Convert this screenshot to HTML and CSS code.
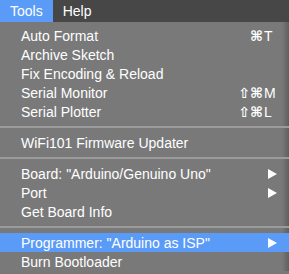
FILE: index.html
```html
<!DOCTYPE html>
<html lang="en">
<head>
  <meta charset="UTF-8">
  <title>Tools menu</title>
  <link rel="stylesheet" href="styles.css">
</head>
<body>

<!-- Menu bar -->
<div class="menubar">
  <span class="menubar-item active">Tools</span>
  <span class="menubar-item">Help</span>
</div>

<!-- Dropdown -->
<div class="menu">
  <div class="item"><span>Auto Format</span><span class="keys"><span class="mods">⌘</span><span class="key">T</span></span></div>
  <div class="item"><span>Archive Sketch</span></div>
  <div class="item"><span>Fix Encoding &amp; Reload</span></div>
  <div class="item"><span>Serial Monitor</span><span class="keys"><span class="mods">⇧⌘</span><span class="key">M</span></span></div>
  <div class="item"><span>Serial Plotter</span><span class="keys"><span class="mods">⇧⌘</span><span class="key">L</span></span></div>

  <div class="sep"></div>
  <div class="item"><span>WiFi101 Firmware Updater</span></div>

  <div class="sep"></div>
  <div class="item"><span>Board: "Arduino/Genuino Uno"</span><svg class="arrow" width="9" height="10" viewBox="0 0 9 10"><polygon points="0,0 9,5 0,10" fill="#fff"/></svg></div>
  <div class="item"><span>Port</span><svg class="arrow" width="9" height="10" viewBox="0 0 9 10"><polygon points="0,0 9,5 0,10" fill="#fff"/></svg></div>
  <div class="item"><span>Get Board Info</span></div>

  <div class="sep"></div>
  <div class="item selected"><span>Programmer: "Arduino as ISP"</span><svg class="arrow" width="9" height="10" viewBox="0 0 9 10"><polygon points="0,0 9,5 0,10" fill="#fff"/></svg></div>
  <div class="item"><span>Burn Bootloader</span></div>
</div>

</body>
</html>
```

FILE: styles.css
```css
body {
  margin: 0;
  width: 289px;
  height: 274px;
  overflow: hidden;
  font-family: "Liberation Sans", "DejaVu Sans", sans-serif;
  font-size: 14px;
  color: #fff;
  background: #787878;
}

.menubar {
  display: flex;
  height: 22px;
  background: #474747;
}
.menubar-item {
  display: flex;
  align-items: center;
  padding: 0 10px;
}
.menubar-item.active {
  background: #5b9bf8;
}

.menu {
  padding-top: 4px;
  background: linear-gradient(to right, #797979 0, #797979 282px, #5f5f5f 289px);
}
.item {
  display: flex;
  align-items: center;
  justify-content: space-between;
  height: 19px;
  padding: 0 12px 0 21px;
}
.item.selected {
  background: #5b9bf8;
}

.keys {
  display: flex;
  align-items: baseline;
  font-family: "DejaVu Sans", "Liberation Sans", sans-serif;
  font-size: 14px;
}
.mods {
  text-align: right;
  font-weight: bold;
}
.key {
  width: 13px;
  margin-left: 1px;
  font-family: "Liberation Sans", sans-serif;
}

.arrow {
  display: block;
}

.sep {
  height: 2px;
  margin: 5px 0;
  background: #9b9b9b;
}
```
